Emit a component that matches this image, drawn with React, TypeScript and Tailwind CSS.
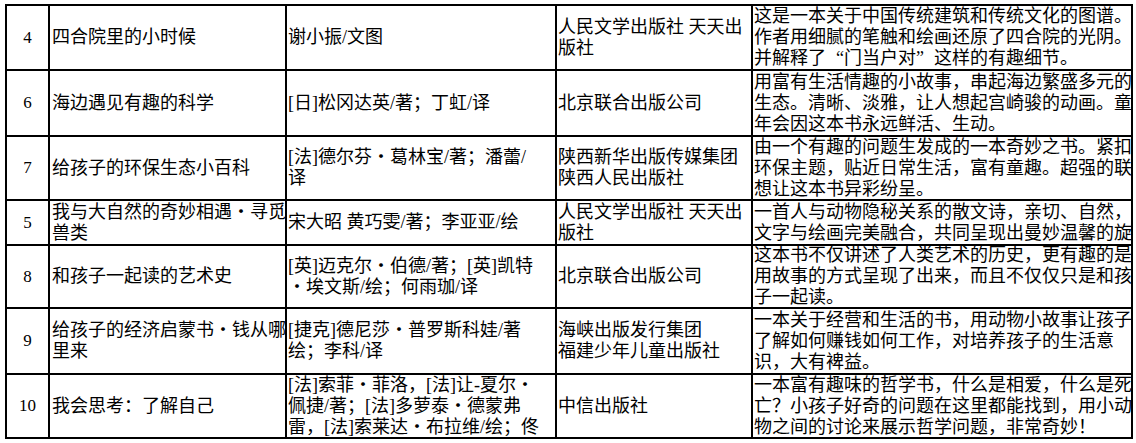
import React from 'react';

type Row = {
    no: string;
    title: React.ReactNode[];
    author: React.ReactNode[];
    publisher: React.ReactNode[];
    desc: React.ReactNode[];
};

// full-width quote marks, as SimSun draws them
const OpenQ = () => <span className="inline-block w-[18px] text-right">“</span>;
const CloseQ = () => <span className="inline-block w-[18px] text-left">”</span>;

const rows: Row[] = [
    {
        no: '4',
        title: ['四合院里的小时候'],
        author: ['谢小振/文图'],
        publisher: ['人民文学出版社 天天出', '版社'],
        desc: [
            '这是一本关于中国传统建筑和传统文化的图谱。',
            '作者用细腻的笔触和绘画还原了四合院的光阴。',
            <>
                并解释了<OpenQ />门当户对<CloseQ />这样的有趣细节。
            </>,
        ],
    },
    {
        no: '6',
        title: ['海边遇见有趣的科学'],
        author: ['[日]松冈达英/著；丁虹/译'],
        publisher: ['北京联合出版公司'],
        desc: [
            '用富有生活情趣的小故事，串起海边繁盛多元的',
            '生态。清晰、淡雅，让人想起宫崎骏的动画。童',
            '年会因这本书永远鲜活、生动。',
        ],
    },
    {
        no: '7',
        title: ['给孩子的环保生态小百科'],
        author: ['[法]德尔芬・葛林宝/著；潘蕾/', '译'],
        publisher: ['陕西新华出版传媒集团', '陕西人民出版社'],
        desc: [
            '由一个有趣的问题生发成的一本奇妙之书。紧扣',
            '环保主题，贴近日常生活，富有童趣。超强的联',
            '想让这本书异彩纷呈。',
        ],
    },
    {
        no: '5',
        title: ['我与大自然的奇妙相遇・寻觅', '兽类'],
        author: ['宋大昭 黄巧雯/著；李亚亚/绘'],
        publisher: ['人民文学出版社 天天出', '版社'],
        desc: [
            '一首人与动物隐秘关系的散文诗，亲切、自然，',
            '文字与绘画完美融合，共同呈现出曼妙温馨的旋',
        ],
    },
    {
        no: '8',
        title: ['和孩子一起读的艺术史'],
        author: ['[英]迈克尔・伯德/著；[英]凯特', '・埃文斯/绘；何雨珈/译'],
        publisher: ['北京联合出版公司'],
        desc: [
            '这本书不仅讲述了人类艺术的历史，更有趣的是',
            '用故事的方式呈现了出来，而且不仅仅只是和孩',
            '子一起读。',
        ],
    },
    {
        no: '9',
        title: ['给孩子的经济启蒙书・钱从哪', '里来'],
        author: ['[捷克]德尼莎・普罗斯科娃/著', '绘；李科/译'],
        publisher: ['海峡出版发行集团', '福建少年儿童出版社'],
        desc: [
            '一本关于经营和生活的书，用动物小故事让孩子',
            '了解如何赚钱如何工作，对培养孩子的生活意',
            '识，大有裨益。',
        ],
    },
    {
        no: '10',
        title: ['我会思考：了解自己'],
        author: [
            '[法]索菲・菲洛，[法]让-夏尔・',
            '佩捷/著；[法]多萝泰・德蒙弗',
            '雷，[法]索莱达・布拉维/绘；佟',
        ],
        publisher: ['中信出版社'],
        desc: [
            '一本富有趣味的哲学书，什么是相爱，什么是死',
            '亡？小孩子好奇的问题在这里都能找到，用小动',
            '物之间的讨论来展示哲学问题，非常奇妙！',
        ],
    },
];

function Cell({ lines, className = '' }: { lines: React.ReactNode[]; className?: string }) {
    return (
        <div className={`bg-white overflow-hidden flex flex-col justify-center ${className}`}>
            {lines.map((line, i) => (
                <div key={i} className="whitespace-nowrap leading-[21px] h-[21px] shrink-0">
                    {line}
                </div>
            ))}
        </div>
    );
}

export default function App() {
    return (
        <div className="w-[1136px] h-[443px] bg-white pt-[4px] pl-[5px] overflow-hidden">
            <div
                className="inline-grid bg-black p-[2px] gap-[2px] grid-cols-[41px_235px_268px_194px_378px] grid-rows-[63px_64px_62px_43px_61px_64px_62px] text-[18px] text-black"
                style={{ fontFamily: '"Liberation Serif", "Noto Sans CJK SC", serif' }}
            >
                {rows.map((row) => (
                    <React.Fragment key={row.no}>
                        <div className="bg-white flex items-center justify-center text-[17px]">{row.no}</div>
                        <Cell lines={row.title} className="pl-[2px]" />
                        <Cell lines={row.author} className="pl-[1px]" />
                        <Cell lines={row.publisher} className="pl-[1px]" />
                        <Cell lines={row.desc} className="pl-[1px]" />
                    </React.Fragment>
                ))}
            </div>
        </div>
    );
}
